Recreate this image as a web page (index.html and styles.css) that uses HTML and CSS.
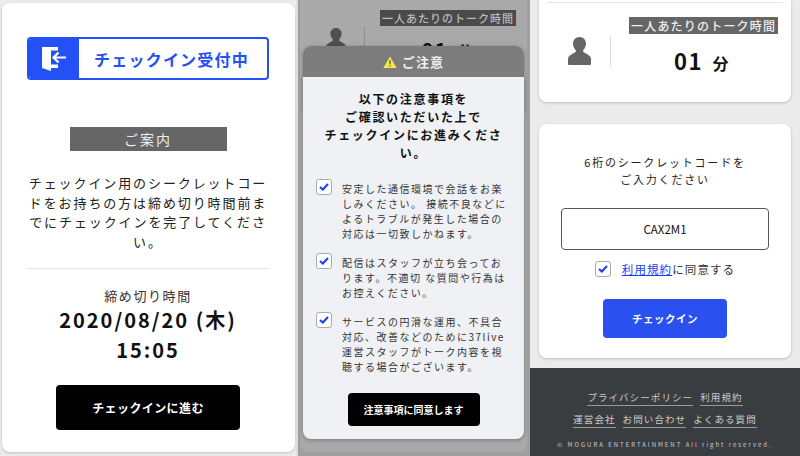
FILE: index.html
```html
<!DOCTYPE html>
<html lang="ja">
<head>
<meta charset="utf-8">
<title>チェックイン</title>
<link rel="stylesheet" href="styles.css">
</head>
<body>
<div class="screens">
  <section class="screen screen-left">
    <div class="card card-main">
      <div class="status">
        <div class="status-icon">
          <svg width="24" height="24" viewBox="0 0 24 24"><path class="fill-white" d="M0 0H16V3.500H9V17.500H16V21H9V24L0 21Z"/><path class="stroke-white" d="M24 10.500H12M16.500 5.500L11.500 10.500L16.500 15.500"/></svg>
        </div>
        <div class="status-text">チェックイン受付中</div>
      </div>
      <div class="tag tag-guide">ご案内</div>
      <p class="guide">チェックイン用のシークレットコー<br>ドをお持ちの方は締め切り時間前ま<br>でにチェックインを完了してくださ<br>い。</p>
      <hr class="rule">
      <div class="deadline-label">締め切り時間</div>
      <div class="deadline">2020/08/20 (木)<br>15:05</div>
      <button class="btn btn-black btn-go">チェックインに進む</button>
    </div>
  </section>

  <section class="screen screen-mid">
    <div class="behind-card">
      <svg class="person" width="20" height="24" viewBox="0 0 23 28"><path d="M11.5 0C15.5 0 18 3 18 6.5C18 9.5 16.5 12 15 13.5C15 15 16 15.5 18 16.5C21 18 23 19.5 23 22V27C23 27.500 22.500 28 22 28H1C.5 28 0 27.500 0 27V22C0 19.5 2 18 5 16.500C7 15.500 8 15 8 13.500C6.500 12 5 9.500 5 6.500C5 3 7.500 0 11.500 0Z"/></svg>
      <div class="behind-div"></div>
      <div class="talk">
        <span class="tag tag-talk">一人あたりのトーク時間</span>
        <div class="talk-value">01 <small>分</small></div>
      </div>
    </div>
    <div class="behind-card behind-lower"></div>
    <div class="modal">
      <header class="modal-head">
        <svg width="14" height="12" viewBox="0 0 14 12"><path class="warn" d="M7 0.500L13.700 12H.3Z"/><path class="warn-mark" d="M6.300 4H7.700V8.300H6.300ZM6.300 9.200H7.700V10.600H6.300Z"/></svg>
        <span>ご注意</span>
      </header>
      <div class="modal-body">
        <h2 class="modal-title">以下の注意事項を<br>ご確認いただいた上で<br>チェックインにお進みくださ<br>い。</h2>
        <ul class="checks">
          <li><span class="box"><svg width="10" height="8" viewBox="0 0 10 8"><path d="M1 4L3.800 6.500L9 1"/></svg></span><p>安定した通信環境で会話をお楽<br>しみください。 接続不良などに<br>よるトラブルが発生した場合の<br>対応は一切致しかねます。</p></li>
          <li><span class="box"><svg width="10" height="8" viewBox="0 0 10 8"><path d="M1 4L3.800 6.500L9 1"/></svg></span><p>配信はスタッフが立ち会ってお<br>ります。不適切 な質問や行為は<br>お控えください。</p></li>
          <li><span class="box"><svg width="10" height="8" viewBox="0 0 10 8"><path d="M1 4L3.800 6.500L9 1"/></svg></span><p>サービスの円滑な運用、不具合<br>対応、改善などのために37live<br>運営スタッフがトーク内容を視<br>聴する場合がございます。</p></li>
        </ul>
        <button class="btn btn-black btn-agree">注意事項に同意します</button>
      </div>
    </div>
  </section>

  <section class="screen screen-right">
    <div class="card card-talk">
      <div class="talk-line"></div>
      <div class="talk-row">
        <svg class="person" width="23" height="28" viewBox="0 0 23 28"><path d="M11.5 0C15.5 0 18 3 18 6.5C18 9.5 16.5 12 15 13.5C15 15 16 15.5 18 16.5C21 18 23 19.5 23 22V27C23 27.500 22.500 28 22 28H1C.5 28 0 27.500 0 27V22C0 19.5 2 18 5 16.500C7 15.500 8 15 8 13.500C6.500 12 5 9.500 5 6.500C5 3 7.500 0 11.500 0Z"/></svg>
        <div class="talk-div"></div>
        <div class="talk">
          <span class="tag tag-talk">一人あたりのトーク時間</span>
          <div class="talk-value">01 <small>分</small></div>
        </div>
      </div>
    </div>
    <div class="card card-code">
      <p class="code-lead">6桁のシークレットコードを<br>ご入力ください</p>
      <div class="code-input">CAX2M1</div>
      <div class="agree"><span class="box"><svg width="10" height="8" viewBox="0 0 10 8"><path d="M1 4L3.800 6.500L9 1"/></svg></span><span><a href="#">利用規約</a>に同意する</span></div>
      <button class="btn btn-blue">チェックイン</button>
    </div>
    <footer class="footer">
      <div class="links"><a href="#">プライバシーポリシー</a><a href="#">利用規約</a></div>
      <div class="links"><a href="#">運営会社</a><a href="#">お問い合わせ</a><a href="#">よくある質問</a></div>
      <div class="copy">© MOGURA ENTERTAINMENT All right reserved.</div>
    </footer>
  </section>
</div>
</body>
</html>
```
FILE: styles.css
```css
* { box-sizing: border-box; }
html, body { margin: 0; padding: 0; }
body { width: 800px; height: 456px; overflow: hidden; background: #ebebeb; font-family: "Noto Sans CJK JP", "Noto Sans", sans-serif; color: #1a1a1a; }
p, ul, h2 { margin: 0; padding: 0; }
a { color: inherit; }

.screens { display: flex; height: 456px; }
.screen { height: 456px; overflow: hidden; flex: none; }
.screen-left { width: 298px; padding: 3px 4px 0 2px; border-right: 2px solid #ddd; background: #ececec; }
.screen-mid { position: relative; width: 232px; background: #9f9f9f; padding: 0 2px; }
.screen-right { width: 270px; background: #ebebeb; }

.card { background: #fff; border-radius: 8px; box-shadow: 0 1px 3px rgba(0,0,0,.2); }
.card-main { width: 293px; height: 449px; padding: 34px 26px 0 25px; display: flex; flex-direction: column; align-items: center; }

.status { display: flex; width: 242px; height: 43px; border: 2px solid #2351f5; border-radius: 4px; flex: none; overflow: hidden; }
.status-icon { width: 50px; background: #2351f5; display: flex; align-items: center; justify-content: center; }
.fill-white { fill: #fff; }
.stroke-white { fill: none; stroke: #fff; stroke-width: 2.200; }
.status-text { flex: 1; display: flex; align-items: center; justify-content: center; padding-right: 3px; color: #2351f5; font-size: 16px; font-weight: 700; letter-spacing: 1.200px; }

.tag { background: #666; color: #eee; text-align: center; }
.tag-guide { width: 157px; height: 24px; margin-top: 47px; font-size: 14px; line-height: 24px; letter-spacing: 2px; flex: none; }
.guide { width: 244px; margin-top: 22px; font-size: 13px; line-height: 19.500px; letter-spacing: 1.900px; text-align: center; white-space: nowrap; color: #222; }
.rule { width: 242px; height: 1px; margin: 17px 0 0; border: 0; background: #e4e4e4; flex: none; }
.deadline-label { margin-top: 17px; font-size: 13px; line-height: 20px; letter-spacing: 1.600px; color: #333; }
.deadline { margin-top: -1px; font-size: 20px; line-height: 29.500px; font-weight: 700; letter-spacing: 2px; text-align: center; color: #111; }

.btn { display: block; border: 0; border-radius: 4px; font: inherit; font-weight: 700; color: #fff; text-align: center; padding: 0; }
.btn-black { background: #000; }
.btn-go { width: 184px; height: 45px; margin-top: 21px; font-size: 12px; letter-spacing: .4px; flex: none; }

.behind-card { display: flex; align-items: flex-start; height: 83px; width: 227px; background: #a9a9a9; border-radius: 0 0 8px 8px; padding: 0 0 0 26px; }
.behind-lower { height: 344px; margin-top: 25px; border-radius: 8px; }
.behind-card .person { fill: #4f4f4f; margin-top: 28px; flex: none; }
.behind-div { width: 1px; height: 30px; background: #8e8e8e; margin: 27px 0 0 18px; flex: none; }
.behind-card .talk { margin: 10px 0 0 15px; }
.behind-card .tag-talk { background: #4a4a4a; color: #bbb; font-size: 11px; line-height: 16px; letter-spacing: 1px; }
.behind-card .talk-value { font-size: 20px; line-height: 28px; margin-top: 10px; padding: 0; }

.talk { display: flex; flex-direction: column; align-items: center; }
.tag-talk { display: block; padding: 0 2px; font-size: 12px; font-weight: 500; line-height: 17px; letter-spacing: 1.200px; white-space: nowrap; }
.talk-value { font-size: 22px; line-height: 30px; font-weight: 700; letter-spacing: 1.500px; margin-top: 11px; padding-right: 3px; color: #111; white-space: nowrap; }
.talk-value small { font-size: 16px; margin-left: 3px; }

.modal { position: absolute; left: 5px; top: 46px; width: 221px; height: 393px; border-radius: 8px; overflow: hidden; background: #f0f1f4; box-shadow: 0 1px 4px rgba(0,0,0,.3); }
.modal-head { height: 31px; background: #7c7c7c; color: #eee; display: flex; align-items: center; justify-content: center; gap: 5px; font-size: 13px; font-weight: 700; letter-spacing: 1.200px; }
.warn { fill: #f3e64a; }
.warn-mark { fill: #666; }
.modal-body { padding: 13px 0 0; display: flex; flex-direction: column; align-items: center; }
.modal-title { font-size: 12px; line-height: 18px; font-weight: 700; letter-spacing: 1.700px; text-align: center; color: #111; white-space: nowrap; }
.checks { list-style: none; width: 100%; margin-top: 19px; padding: 0 0 0 13px; }
.checks li { display: flex; align-items: flex-start; gap: 10px; margin-top: 14px; }
.checks li:first-child { margin-top: 0; }
.checks p { font-size: 10px; line-height: 15px; letter-spacing: 1.500px; color: #333; white-space: nowrap; }
.box { flex: none; width: 16px; height: 16px; border: 1.500px solid #aaa; border-radius: 3px; background: #fff; display: flex; align-items: center; justify-content: center; }
.checks .box { margin-top: -2px; }
.box path { fill: none; stroke: #1a3cf0; stroke-width: 2; }
.btn-agree { width: 132px; height: 33px; margin-top: 19px; font-size: 10px; letter-spacing: 0; }

.card-talk { width: 252px; height: 102px; margin-left: 9px; border-radius: 0 0 8px 8px; padding-top: 2px; }
.talk-line { height: 1px; margin: 0 8px; background: #e4e4e4; }
.talk-row { display: flex; align-items: center; padding: 14px 0 0 29px; }
.card-talk .person { fill: #666; margin-top: 6px; }
.talk-div { width: 1px; height: 30px; background: #ddd; margin: 6px 0 0 19px; }
.card-talk .talk { margin-left: 18px; }

.card-code { width: 252px; height: 234px; margin: 22px 0 0 9px; display: flex; flex-direction: column; align-items: center; padding-top: 30px; }
.code-lead { font-size: 11px; line-height: 17px; letter-spacing: 1.800px; text-align: center; color: #222; white-space: nowrap; }
.code-input { width: 208px; height: 42px; margin-top: 20px; border: 1px solid #555; border-radius: 4px; text-align: center; font-size: 11.500px; line-height: 40px; color: #111; }
.agree { display: flex; align-items: center; gap: 11px; margin-top: 11px; font-size: 11.500px; letter-spacing: 1.100px; color: #333; }
.agree a { color: #1a3cf0; }
.btn-blue { width: 124px; height: 39px; margin-top: 22px; background: #2a50f0; font-size: 10.500px; letter-spacing: .5px; }

.footer { height: 90px; margin-top: 10px; background: #3a3d40; color: #ccc; padding-top: 22px; }
.links { display: flex; justify-content: center; gap: 7px; font-size: 9.500px; line-height: 14px; letter-spacing: 1.100px; margin-bottom: 6px; }
.links a { text-decoration: none; border-bottom: 1.500px solid #999; padding-bottom: 1px; }
.copy { margin-top: 12px; text-align: center; font-size: 6px; line-height: 10px; letter-spacing: 2px; }
```
